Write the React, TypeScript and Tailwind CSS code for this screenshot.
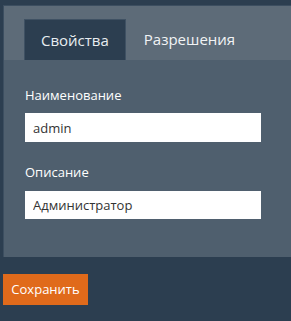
import React, { useState } from 'react';

const App: React.FC = () => {
  const [tab, setTab] = useState<'props' | 'perms'>('props');
  const [name, setName] = useState('admin');
  const [desc, setDesc] = useState('Администратор');

  const tabClass = (active: boolean): string =>
    active
      ? 'h-[41px] px-[16px] bg-[#2c3e50] border border-b-0 border-[#3f5163] text-[#e8edf1]'
      : 'h-[41px] px-[18px] text-[#f1f3f5]';

  return (
    <div
      className="min-h-[321px] w-[291px] bg-[#2c3e50] pt-[5px] overflow-hidden"
      style={{ fontFamily: '"Open Sans", "Noto Sans", sans-serif' }}
    >
      <div className="ml-[3px] border-l border-t border-[#3c4e60] bg-[#4f5f6e]">
        <div className="h-[54px] bg-[#5d6b78] flex items-end pl-[20px]">
          <button className={`${tabClass(tab === 'props')} text-[15px]`} onClick={() => setTab('props')}>
            Свойства
          </button>
          <button className={`${tabClass(tab === 'perms')} text-[15px]`} onClick={() => setTab('perms')}>
            Разрешения
          </button>
        </div>

        <div className="pt-[26px] pb-[38px] pl-[21px]">
          <label className="block text-[13px] text-white leading-[18px]">Наименование</label>
          <input
            value={name}
            onChange={(e) => setName(e.target.value)}
            className="mt-[9px] block w-[236px] h-[29px] bg-white px-[8px] text-[13px] text-[#333] outline-none"
          />
          <label className="block mt-[21px] text-[13px] text-white leading-[18px]">Описание</label>
          <input
            value={desc}
            onChange={(e) => setDesc(e.target.value)}
            className="mt-[10px] block w-[236px] h-[28px] bg-white px-[8px] text-[13px] text-[#333] outline-none"
          />
        </div>
      </div>

      <button className="mt-[17px] ml-[3px] h-[31px] w-[85px] bg-[#e06a1b] text-white text-[13px]">
        Сохранить
      </button>
    </div>
  );
};

export default App;
